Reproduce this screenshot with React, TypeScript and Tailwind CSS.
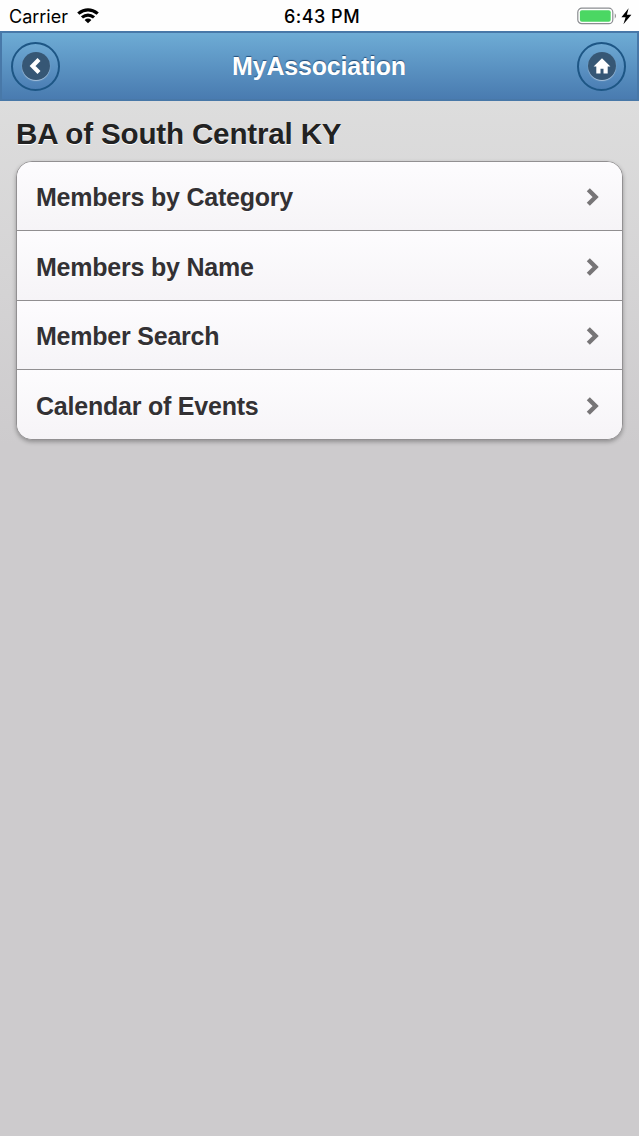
const menuItems = ["Members by Category", "Members by Name", "Member Search", "Calendar of Events"];

const StatusBar = () => (
  <div className="grid h-[31px] grid-cols-3 items-center bg-[#fefefe] text-black font-[Inter,sans-serif]">
    <div className="flex items-center pl-[9px] pt-[2px]">
      <span className="text-[18px] leading-5">Carrier</span>
      <svg className="mb-[2px] ml-[9px] h-4 w-[22px]" viewBox="0 0 22 16">
        <path d="M0.2 4.5Q11-3.8 21.8 4.5L19.6 6.8Q11 .1 2.4 6.8Z" />
        <path d="M3.9 8.3Q11 2.9 18.1 8.3L16 10.5Q11 6.8 6 10.5Z" />
        <path d="M7.6 12Q11 9.2 14.4 12L11 15.3Z" />
      </svg>
    </div>
    <div className="pl-[5px] pt-[2px] text-center text-[18px] font-medium leading-5 tracking-[0.5px]">6:43 PM</div>
    <div className="flex items-center justify-end pr-[7px]">
      <svg className="h-[18px] w-[55px]" viewBox="0 0 55 18">
        <rect x="0.8" y="1.2" width="35" height="15.5" rx="4" fill="white" stroke="#8b8d91" strokeWidth="1.2" />
        <rect x="2.9" y="3.3" width="30.8" height="11.4" rx="2" fill="#4bd763" />
        <path d="M37.8 6.3Q39.8 9 37.8 11.7Z" fill="#777" />
        <path d="M51.6 1.2L44.4 10.2h4.2l-2.2 7L54.4 7.8H49.9Z" fill="currentColor" />
      </svg>
    </div>
  </div>
);

const HeaderButton = ({ icon, label }: { icon: "back" | "home"; label: string }) => (
  <button
    aria-label={label}
    className="flex h-[49px] w-[49px] items-center justify-center rounded-full border-2 border-[#1d5685] bg-linear-to-b from-[#6da8d2] to-[#4b7eb4]"
  >
    <span className="flex h-7 w-7 items-center justify-center rounded-full bg-[#365775] shadow-[0_1px_1px_rgba(255,255,255,0.5)]">
      {icon === "back" ? (
        <svg className="h-5 w-5" viewBox="0 0 20 20" fill="none">
          <path d="M13 3.6L6.6 10l6.4 6.4" stroke="white" strokeWidth="4.2" />
        </svg>
      ) : (
        <svg className="h-5 w-5" viewBox="0 0 20 20">
          <path d="M10 2.2L1.6 10.6h2.7v6.8h4.2v-4.6h3v4.6h4.2v-6.8h2.7Z" fill="white" />
        </svg>
      )}
    </span>
  </button>
);

const App = () => {
  return (
    <div className="h-[1136px] w-[639px] overflow-hidden bg-[#cdcbcd] font-['Liberation_Sans',Arial,sans-serif]">
      <StatusBar />
      <header className="flex h-[70px] items-center justify-between border-2 border-[#4878a8] bg-linear-to-b from-[#6eacd5] to-[#497bb0] pl-[9px] pr-[11px]">
        <HeaderButton icon="back" label="Back" />
        <h2 className="pl-px text-[25px] font-bold leading-8 tracking-[-0.2px] text-white [text-shadow:0_-1px_1px_#254f7a]">
          MyAssociation
        </h2>
        <HeaderButton icon="home" label="Home" />
      </header>

      <main className="h-[1035px] bg-linear-to-b from-[#dddddd] to-[#cdcbcd] to-[345px] px-4 pt-[15px]">
        <h1 className="whitespace-nowrap text-[29.6px] font-bold leading-9 tracking-[-0.18px] text-[#222] [text-shadow:0_1px_0_white]">
          BA of South Central KY
        </h1>
        <ul className="mt-[9px] h-[279px] overflow-hidden rounded-[16px] border border-[#929092] bg-white shadow-[0_2px_4px_rgba(0,0,0,0.3)]">
          {menuItems.map((item) => (
            <li
              key={item}
              className="flex h-[69.4px] items-center justify-between border-b border-[#918f91] bg-linear-to-b from-[#fdfcfe] to-[#f6f4f7] pl-[19px] pr-[22px] pt-[2px] last:border-b-0"
            >
              <span className="whitespace-nowrap text-[25px] font-bold leading-8 tracking-[-0.22px] text-[#333134] [text-shadow:0_1px_0_white]">
                {item}
              </span>
              <svg className="h-5 w-[14px]" viewBox="0 0 14 20" fill="none">
                <path d="M2.3 2.8L9.6 10 2.3 17.2" stroke="#777577" strokeWidth="4.4" />
              </svg>
            </li>
          ))}
        </ul>
      </main>
    </div>
  );
};

export default App;
